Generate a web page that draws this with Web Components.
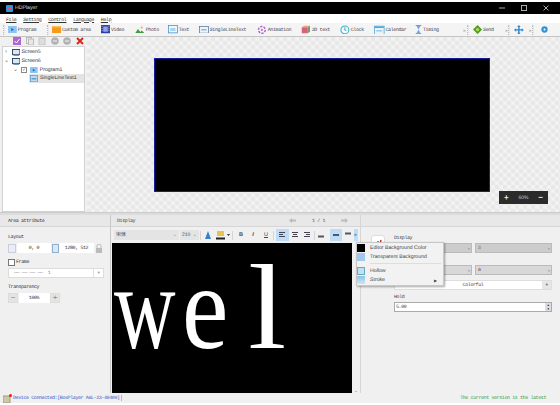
<!DOCTYPE html>
<html><head><meta charset="utf-8">
<style>
html,body{margin:0;padding:0;width:560px;height:405px;overflow:hidden;background:#f0f0f0}
</style></head><body>
<hd-app></hd-app>
<script>
const s=(w,h,b)=>`<svg width="${w}" height="${h}" viewBox="0 0 ${w} ${h}" style="display:block;flex:none">${b}</svg>`;
const ic={
program:s(11,9,'<rect width="11" height="9" fill="#8cc5f0"/><path d="M4 2.5l3.5 2-3.5 2z" fill="#1b6cc0"/>'),
custom:s(13,11,'<rect width="13" height="11" fill="#f59a1c"/><rect width="13" height="2" fill="#fbbf5a"/>'),
video:s(12,11,'<rect width="12" height="11" fill="#2a3fb0"/><rect x="3" y="2" width="6" height="7" fill="#8fa4ea"/><path d="M1 1h1v1H1zM1 4h1v1H1zM1 7h1v1H1zM10 1h1v1h-1zM10 4h1v1h-1zM10 7h1v1h-1z" fill="#fff"/>'),
photo:s(13,10,'<path d="M0 10l4-6 3 4 2-2 4 4z" fill="#3d9a3d"/><circle cx="9" cy="2" r="1.500" fill="#f3b23a"/>'),
text:s(13,11,'<rect x=".5" y=".5" width="12" height="10" fill="#eef7fd" stroke="#3f8fc8"/><rect x="3" y="4" width="7" height="4" fill="#a6d3ef"/>'),
sline:s(13,10,'<rect x=".5" y=".5" width="12" height="9" fill="#eef3f8" stroke="#55779a"/><rect x="3" y="4" width="7" height="2" fill="#8fb8d8"/>'),
anim:s(13,13,'<circle cx="6.500" cy="6.500" r="4.500" fill="none" stroke="#a866d6" stroke-width="2" stroke-dasharray="3 1.600"/><circle cx="6.500" cy="6.500" r="1.500" fill="#e36fb0"/>'),
d3:s(13,12,'<rect x="1" y="3" width="8" height="8" fill="#d9607a"/><path d="M1 3l3-2h8L9 3z" fill="#e9a37a"/><path d="M9 3l3-2v8l-3 2z" fill="#6ca36c"/>'),
clock:s(13,13,'<circle cx="6.500" cy="6.500" r="5.300" fill="#f2fbfd" stroke="#3bb2cf" stroke-width="1.400"/><path d="M6.500 3v4h2" fill="none" stroke="#2a7f99"/>'),
cal:s(14,13,'<rect x=".5" y="1.500" width="13" height="11" fill="#e6f4fc" stroke="#4aa5dc"/><rect x="1" y="2" width="12" height="2" fill="#4aa5dc"/><rect x="3" y="7" width="8" height="1.500" fill="#7fc0e8"/>'),
time:s(10,13,'<path d="M1 .5h8M1 12.500h8" stroke="#3a6fc0" stroke-width="1.200"/><path d="M2 1l3 5.500L2 12h6L5 6.500 8 1z" fill="#7ba3de"/>'),
send:s(14,14,'<path d="M7 0l7 7-7 7-7-7z" fill="#4e9f2e"/><circle cx="7" cy="7" r="2.500" fill="#b5d84f"/>'),
cross:s(14,14,'<path d="M7 0l2.500 3H8v3h3V4.500l3 2.500-3 2.500V8H8v3h1.500L7 14l-2.500-3H6V8H3v1.500L0 7l3-2.500V6h3V3H4.500z" fill="#2d86cf"/>'),
play:s(10,10,'<circle cx="5" cy="5" r="4.500" fill="#2d94da"/><path d="M4 3l3 2-3 2z" fill="#fff"/>'),
screen:s(12,10,'<rect x=".7" y=".7" width="10.600" height="7.300" fill="#dbe7f2" stroke="#2f4a66" stroke-width="1.400"/><rect x="2" y="8" width="8" height="2" fill="#7a93aa"/>'),
line:s(10,9,'<rect x=".5" y=".5" width="9" height="8" fill="#bcdcf3" stroke="#5f9fd0"/><rect x="2" y="4" width="6" height="1.500" fill="#4d8fc6"/>'),
};
const sc=(svg,f)=>svg.replace(/width="(\d+)" height="(\d+)"/,(m,w,h)=>`width="${w*f}" height="${h*f}"`);
const M='font:5px "Liberation Mono",monospace;letter-spacing:-.4px;text-rendering:geometricPrecision;';
function def(name,css,html){customElements.define(name,class extends HTMLElement{constructor(){super();this.attachShadow({mode:'open'}).innerHTML=`<style>${css}</style>${typeof html==='function'?html(this):html}`;}});}

def('hd-titlebar',`:host{display:flex;align-items:center;height:12px;margin-top:2px;background:#000;color:#ddd;font:5.200px "Liberation Sans",sans-serif;text-rendering:geometricPrecision;padding:0 0 0 6px;gap:2px;flex:none}
.sp{flex:1}.w{width:20px;display:flex;justify-content:center;align-items:center;height:12px}`,
`<svg width="7" height="7" viewBox="0 0 7 7" style="flex:none"><rect width="7" height="7" rx="1" fill="#2f95d8"/><rect x="2" y="2" width="3" height="3" fill="#e44f7a"/></svg><span>HDPlayer</span><span class="sp"></span>
<span class="w"><svg width="6" height="6"><path d="M0 3h6" stroke="#aaa"/></svg></span><span class="w"><svg width="6" height="6"><rect x=".5" y=".5" width="5" height="5" fill="none" stroke="#aaa"/></svg></span><span class="w" style="margin-right:4px"><svg width="6" height="6"><path d="M.5.5l5 5M5.500.5l-5 5" stroke="#aaa"/></svg></span>`);

def('hd-menubar',`:host{display:flex;align-items:center;height:7px;margin-top:2px;padding:0 0 0 6px;gap:6.800px;background:#fff;${M}color:#333;flex:none}
span{text-decoration:underline;text-decoration-thickness:.4px;text-underline-offset:1px}`,
`<span>File</span><span>Setting</span><span>Control</span><span>Language</span><span>Help</span>`);

def('hd-toolitem',`:host{display:inline-flex;align-items:center;gap:1px;${M}color:#3f4656;white-space:nowrap;height:13px;flex:none;box-sizing:border-box}`,`<slot name="i"></slot><slot></slot>`);
def('hd-sep',`:host{display:block;width:2px;height:10px;flex:none;border-left:1px dotted #bbb;border-right:1px solid #e8e8e8;box-sizing:border-box}`,``);

def('hd-toolbar',`:host{display:flex;align-items:center;height:14px;box-sizing:border-box;background:#f4f4f4;border-bottom:1px solid #c4c4c4;flex:none;padding-left:3px;overflow:hidden}
.sm{font:5px "Liberation Sans";color:#999;flex:none;display:block}.p{display:block;flex:none}`,
()=>{
 const it=(i,t,w,f=.75)=>`<hd-toolitem style="width:${w}px"><span slot="i">${sc(ic[i],f)}</span>${t}</hd-toolitem>`;
 return `<hd-sep></hd-sep><span class="p" style="width:3px"></span>`+it('program','Program',39,.8)+`<hd-sep></hd-sep><span class="p" style="width:3px"></span>`+
 it('custom','Custom area',49,.7)+it('video','Video',34)+it('photo','Photo',33)+it('text','Text',31)+it('sline','SingleLineText',58)+it('anim','Animation',44)+it('d3','3D text',39)+it('clock','Clock',34)+it('cal','Calendar',41,.75)+it('time','Timing',48,.7)+
 `<span class="sm" style="width:4px">»</span><hd-sep></hd-sep><span class="p" style="width:4px"></span>`+it('send','Send',32,.65)+`<span class="sm" style="width:3px">»</span><hd-sep></hd-sep><span class="p" style="margin-left:4px">${sc(ic.cross,.7)}</span><span class="sm" style="margin-left:5px;width:3px">»</span><hd-sep></hd-sep><span class="p" style="margin-left:7px">${sc(ic.play,.7)}</span>`;
});

def('hd-tree-row',`:host{display:flex;align-items:center;height:8.700px;font:5.200px "Liberation Sans",sans-serif;text-rendering:geometricPrecision;color:#333;white-space:nowrap}`,`<slot></slot>`);

def('hd-side',`:host{display:flex;flex-direction:column;width:87px;flex:none;background:#f0f0f0;box-sizing:border-box;padding:0 2px 0 2px}
.tools{display:flex;align-items:center;height:8px;padding-left:11px;padding-bottom:1px;gap:4.500px;flex:none}
.b{width:8px;height:8px;display:block;flex:none}
.tree{flex:1;background:#fff;border:1px solid #d2d2d2;box-sizing:border-box;padding-top:1px}
.ar{width:4px;font:6px/6px "Liberation Sans";color:#666;text-align:center;flex:none}
.ck{width:4px;height:4px;border:1px solid #888;flex:none;font:4px/4px "Liberation Sans";text-align:center;color:#444;margin:0 3px 0 4px}`,
`<div class="tools">
<svg class="b" viewBox="0 0 8 8"><rect width="8" height="8" fill="#b064d8"/><path d="M1.500 4l2 2 3-4" stroke="#fff" fill="none"/></svg>
<svg class="b" viewBox="0 0 8 8"><rect x=".5" y=".5" width="5" height="6" fill="#eee" stroke="#bbb"/><rect x="2.500" y="2" width="5" height="6" fill="#e8e8e8" stroke="#bbb"/></svg>
<svg class="b" viewBox="0 0 8 8"><rect x="1" y="1" width="6" height="7" fill="#ddd" stroke="#c5c5c5"/></svg>
<svg class="b" viewBox="0 0 8 8"><circle cx="4" cy="4" r="3.800" fill="#b2b2b2"/><rect x="2" y="3.400" width="4" height="1.200" fill="#e8e8e8"/></svg>
<svg class="b" viewBox="0 0 8 8"><circle cx="4" cy="4" r="3.800" fill="#b2b2b2"/><rect x="2" y="3.400" width="4" height="1.200" fill="#e8e8e8"/></svg>
<svg class="b" viewBox="0 0 8 8"><path d="M1 1l6 6M7 1L1 7" stroke="#d8281e" stroke-width="2"/></svg>
</div>
<div class="tree">
<hd-tree-row><span class="ar" style="margin:0 4px 0 1px">›</span>${sc(ic.screen,.7)}<span style="margin-left:1px">Screen5</span></hd-tree-row>
<hd-tree-row><span class="ar" style="margin:0 4px 0 1px">⌄</span>${sc(ic.screen,.7)}<span style="margin-left:1px">Screen6</span></hd-tree-row>
<hd-tree-row><span class="ar" style="margin-left:10px">⌄</span><span class="ck">✓</span>${sc(ic.program,.7)}<span style="margin-left:2px">Program1</span></hd-tree-row>
<hd-tree-row style="margin-left:26px;background:#e4e4e4;width:55px;padding-left:1px;box-sizing:border-box">${sc(ic.line,.8)}<span style="margin-left:2px">SingleLineText1</span></hd-tree-row>
</div>`);

def('hd-canvas',`:host{display:flex;flex:1;position:relative;align-items:flex-start;padding:21px 0 0 67px;box-sizing:border-box;
background-color:#f2f2f2;background-image:linear-gradient(45deg,#e8e8e8 25%,transparent 25%,transparent 75%,#e8e8e8 75%),linear-gradient(45deg,#e8e8e8 25%,transparent 25%,transparent 75%,#e8e8e8 75%);background-size:8px 8px;background-position:0 0,4px 4px}
.scr{width:336px;height:134px;background:#000;border:1px solid #1c1c9c;box-sizing:border-box;flex:none}
.zoom{position:absolute;left:412px;top:154px;width:49px;height:13px;background:#2b2b2b;color:#ccc;display:flex;align-items:center;justify-content:space-between;padding:0 5px;box-sizing:border-box;font:5px "Liberation Sans",sans-serif;text-rendering:geometricPrecision}
b{font:bold 8px/8px "Liberation Sans";color:#eee}`,
`<div class="scr"></div><div class="zoom"><b>+</b><span>60%</span><b>−</b></div>`);

def('hd-area',`:host{display:block;width:111px;flex:none;background:#f0f0f0;border-right:1px solid #c8c8c8;box-sizing:border-box;${M}line-height:6px;color:#333}
.h{height:12px;box-sizing:border-box;display:flex;align-items:center;padding-left:8px;background:#e8e8e8;border-bottom:1px solid #d6d6d6}
.c{padding:7px 0 0 8px}
.row{display:flex;align-items:center;width:96px;height:10px;margin-top:3px}
.f{background:#fff;height:10px;display:flex;align-items:center;justify-content:center;box-sizing:border-box}
.frame{display:flex;align-items:center;gap:1px;margin-top:5px;height:8px}
.ck{width:7px;height:7px;border:1px solid #777;background:#fff;box-sizing:border-box}
.dd{background:#fff;border:1px solid #dcdcdc;height:10px;width:96px;box-sizing:border-box;margin-top:2px;display:flex;align-items:center;padding-left:5px;color:#888;white-space:nowrap;overflow:hidden}
.dd i{margin-left:auto;width:9px;text-align:center;font:4px/8px "Liberation Sans";color:#999;border-left:1px solid #e0e0e0;height:100%}
.t{display:flex;margin-top:3px;width:52px;height:10px;align-items:center;justify-content:space-between}
.t b{width:10px;height:10px;background:#e4e4e4;border:1px solid #ddd;box-sizing:border-box;text-align:center;font:8px/8px "Liberation Sans";color:#888;flex:none}`,
`<div class="h">Area attribute</div><div class="c"><div>Layout</div>
<div class="row"><span style="width:8px;height:9px;border:1px solid #ccd;background:#e8eef4;box-sizing:border-box;flex:none;margin-right:1px"></span><span class="f" style="width:34px">0, 0</span><span style="width:7px;height:9px;border:1px solid #8fb0cc;background:#dbe8f3;box-sizing:border-box;flex:none;margin-left:1px"></span><span class="f" style="width:35px">1280, 512</span><svg width="8" height="9" viewBox="0 0 8 9" style="margin-left:1px;flex:none"><rect x="1" y="4" width="6" height="5" fill="#bbb"/><path d="M2 4V2a2 2 0 014 0v2" fill="none" stroke="#bbb"/></svg></div>
<div class="frame"><span class="ck"></span><span>Frame</span></div>
<div class="dd">—— —— —— ——&nbsp;&nbsp;1<i>▼</i></div>
<div style="margin-top:6px">Transparency</div>
<div class="t"><b>−</b><span class="f" style="width:31px">100%</span><b>+</b></div></div>`);

def('hd-display',`:host{display:flex;flex-direction:column;width:249px;flex:none;background:#f0f0f0;position:relative}
.h{height:12px;box-sizing:border-box;display:flex;align-items:center;padding:0 12px 0 6px;background:#e8e8e8;border-bottom:1px solid #d6d6d6;${M}color:#444;flex:none}
.pg{margin-left:auto;display:flex;gap:16px;align-items:center;color:#555}
.pg svg{display:block}
.tb{height:16px;display:flex;align-items:center;padding-left:3px;flex:none;font:5px "Liberation Sans",sans-serif;text-rendering:geometricPrecision;color:#444}
.sel{height:10px;background:#e4e4e4;display:flex;align-items:center;padding:0 2px;box-sizing:border-box;font-family:"Noto Sans CJK SC",sans-serif;flex:none;line-height:6px;overflow:hidden}
.sel i{margin-left:auto;font-style:normal;font-size:5px;color:#888}
.bt{width:12px;height:12px;flex:none;display:flex;align-items:center;justify-content:center;font:bold 5.500px "Liberation Sans",sans-serif;color:#445}
.a{width:12.500px}
.on{background:#bddcf5}
.v{width:1px;height:9px;background:#d5d5d5;flex:none}
.ln{display:block;width:6px;height:6px}
.ed{flex:1;display:flex;min-height:0;padding-left:1px}
.blk{width:240px;background:#000;color:#fff;display:flex;padding-left:2px;box-sizing:border-box;font:120px/130px "Liberation Serif","DejaVu Serif",serif}
.blk span{display:block;transform-origin:0 0;height:130px;flex:none}
.sb{width:8px;background:#f0f0f0;font:5px "Liberation Sans";color:#777;display:flex;align-items:flex-end;justify-content:center}`,
`<div class="h">Display<span class="pg"><svg width="7" height="5"><path d="M0 2.500l3-2.500v1.500h4v2H3V5z" fill="#bbb"/></svg><span>1 / 1</span><svg width="7" height="5"><path d="M7 2.500L4 0v1.500H0v2h4V5z" fill="#bbb"/></svg></span></div>
<div class="tb"><span class="sel" style="width:65px">宋体<i>⌄</i></span><span class="sel" style="width:19px;margin-left:1px;font-family:'Liberation Sans'">210<i>⌄</i></span><span class="v" style="margin:0 1px"></span>
<span class="bt"><svg width="8" height="8" viewBox="0 0 8 8"><path d="M1 8l3-8 3 8z" fill="#3f7fc4"/></svg></span>
<span class="bt" style="width:18px;justify-content:flex-end;padding-right:1px;box-sizing:border-box"><svg width="15" height="9" viewBox="0 0 15 9"><rect x="1" y="0" width="7" height="5" fill="#e8c24a"/><rect y="6.500" width="9" height="2" fill="#222"/><path d="M11 3h3l-1.500 2z" fill="#333"/></svg></span><span class="v" style="margin-right:2px"></span>
<span class="bt">B</span><span class="bt" style="font-style:italic">I</span><span class="bt" style="text-decoration:underline;font-weight:normal;margin-left:1px">U</span><span class="v" style="margin:0 2px 0 1px"></span>
<span class="bt a on"><svg class="ln" viewBox="0 0 6 6"><path d="M0 .500h6M0 2.500h4M0 4.500h6" stroke="#445"/></svg></span><span class="bt a"><svg class="ln" viewBox="0 0 6 6"><path d="M0 .500h6M1 2.500h4M0 4.500h6" stroke="#445"/></svg></span><span class="bt a"><svg class="ln" viewBox="0 0 6 6"><path d="M0 .500h6M2 2.500h4M0 4.500h6" stroke="#445"/></svg></span><span class="v"></span>
<span class="bt"><svg class="ln" viewBox="0 0 6 6"><rect y="3.500" width="6" height="2" fill="#556"/></svg></span><span class="bt on" style="margin-left:3px"><svg class="ln" viewBox="0 0 6 6"><rect y="2" width="6" height="2" fill="#556"/></svg></span><span class="bt"><svg class="ln" viewBox="0 0 6 6"><rect y=".500" width="6" height="2" fill="#556"/></svg></span>
<span class="on" style="width:4px;height:12px;font:5px/12px 'Liberation Sans';text-align:center;flex:none;overflow:hidden">»</span></div>
<div class="ed"><div class="blk"><span style="width:68px;transform:scaleX(.71)">w</span><span style="width:66px;transform:scaleX(.87)">e</span><span style="transform:scaleX(1.150)">l</span></div><div class="sb">⌄</div></div><slot></slot>`);

def('hd-props',`:host{display:block;flex:1;background:#f0f0f0;border-left:1px solid #d6d6d6;${M}color:#444;box-sizing:border-box;min-width:0}
.h{height:12px;box-sizing:border-box;background:#e8e8e8;border-bottom:1px solid #d6d6d6}
.head{display:flex;align-items:flex-start;padding:8px 0 0 10px;height:16px;box-sizing:border-box;gap:9px}
.logo{width:14px;height:14px;background:#fff;border:1px solid #ddd;border-radius:3px;box-sizing:border-box;flex:none}
.rows{padding-left:33px;display:flex;flex-direction:column}
.two{display:flex;gap:3px;height:10px;width:158px}
.g{background:#ccc;height:10px;flex:1;box-sizing:border-box;border:1px solid #bbb;display:flex;align-items:center;padding-left:2px;color:#777}
.g i{margin-left:auto;font-style:normal;color:#777;padding-right:1px}
.col{width:158px;height:10px;background:#fff;display:flex;align-items:center;justify-content:center;margin-top:5px;position:relative;box-sizing:border-box;border:1px solid #ddd}
.col i{position:absolute;right:0;top:0;width:9px;height:8px;background:#e6e6e6;font:4px/8px "Liberation Sans";text-align:center;color:#666}
.hold{width:158px;height:10px;background:#fff;border:1px solid #aaa;box-sizing:border-box;display:flex;align-items:center;padding-left:1px;margin-top:2px;position:relative}
.hold i{position:absolute;right:0;top:0;width:6px;height:8px;background:#ddd;font:3px/4px "Liberation Sans";text-align:center;color:#222}`,
`<div class="h"></div><div class="head"><div class="logo"><svg width="12" height="12" viewBox="0 0 12 12" style="display:block"><path d="M3 10l3-4 2 2 1-4" stroke="#d8281e" stroke-width="1.500" fill="none"/></svg></div><span style="margin-top:0">Display</span></div>
<div class="rows"><div class="two"><span class="g"><i>⌄</i></span><span class="g" style="flex:0 0 77px">S<i>⌄</i></span></div>
<div style="height:12px"></div>
<div class="two"><span class="g" style="background:#d8d8d8"><i>⌄</i></span><span class="g" style="flex:0 0 77px;background:#d8d8d8;color:#444">6<i>⌄</i></span></div>
<div class="col">Colorful<i>▼</i></div>
<div style="margin-top:4px;height:6px;line-height:6px">Hold</div>
<div class="hold">5.00<i>▲<br>▼</i></div></div>`);

def('hd-menu',`:host{position:absolute;left:245px;top:27px;width:88px;height:44px;background:#f2f2f2;border:1px solid #c8c8c8;box-shadow:1px 1px 2px rgba(0,0,0,.35);box-sizing:border-box;font:5.200px "Liberation Sans",sans-serif;text-rendering:geometricPrecision;color:#444;display:flex;flex-direction:column;z-index:5}
.r{display:flex;align-items:center;height:9px;gap:5px;position:relative;white-space:nowrap;flex:none}
.i{width:8px;height:8px;flex:none;box-sizing:border-box}
.s{height:1px;background:#ddd;margin:2px 2px 2.500px 13px;flex:none}
.ar{position:absolute;right:6px;font-size:4px}`,
`<div class="r"><span class="i" style="background:#000"></span>Editor Background Color</div>
<div class="r"><span class="i" style="background:#9fc9ef"></span>Transparent Background</div>
<div class="s"></div>
<div class="r"><span class="i" style="background:#bfe0ee;border:1px solid #69a9c4"></span>Hollow</div>
<div class="r"><span class="i" style="background:linear-gradient(#8cc4e0,#cfe6f2)"></span>Stroke<span class="ar">▶</span></div>`);

def('hd-status',`:host{display:flex;align-items:center;height:10px;background:#f0f0f0;${M}box-sizing:border-box;flex:none;padding:0 14px 0 3px}
.g{margin-left:auto;color:#2f9c4f}.b{color:#3a55c8;margin-left:1px;border-right:1px solid #bbb;padding-right:1px}`,
`<svg width="9" height="9" viewBox="0 0 9 9" style="flex:none"><rect y="2" width="7" height="7" fill="#cfc8a0" stroke="#999"/><circle cx="7.500" cy="1.500" r="1.500" fill="#e8201a"/></svg><span class="b">Device Connected:[BoxPlayer A6L-23-40409]</span><span class="g">The current version is the latest</span>`);

def('hd-app',`:host{display:flex;flex-direction:column;width:560px;height:405px;background:#fff;overflow:hidden}
.top{display:flex;height:175px;flex:none;min-height:0}
.bot{display:flex;flex:1;min-height:0;border-top:1px solid #ccc;padding-top:2px;background:#dcdcdc;position:relative}
.foot{height:2px;background:#fff;flex:none}`,
`<hd-titlebar></hd-titlebar><hd-menubar></hd-menubar><hd-toolbar></hd-toolbar>
<div class="top"><hd-side></hd-side><hd-canvas></hd-canvas></div>
<div class="bot"><hd-area></hd-area><hd-display><hd-menu></hd-menu></hd-display><hd-props></hd-props></div>
<hd-status></hd-status><div class="foot"></div>`);
</script>
</body></html>
